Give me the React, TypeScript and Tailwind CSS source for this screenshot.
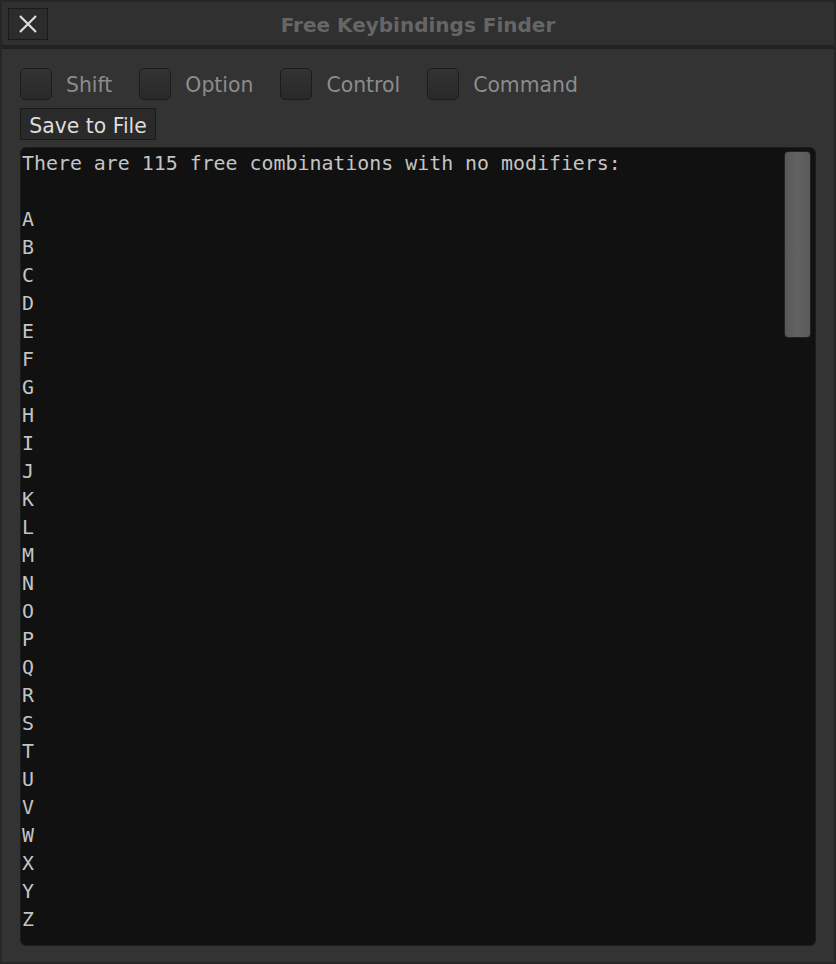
import React from "react";

const letters = "ABCDEFGHIJKLMNOPQRSTUVWXYZ".split("");

function Check({ label }: { label: string }) {
  return (
    <div className="flex items-center">
      <div className="w-[32px] h-[32px] rounded-[5px] border border-[#1c1c1c] bg-gradient-to-b from-[#333333] to-[#292929]" />
      <span className="ml-[14px] text-[20.4px] leading-none text-[#8c8c8c] pt-[3px]">{label}</span>
    </div>
  );
}

export default function App() {
  return (
    <div
      className="w-[836px] h-[964px] bg-[#262626] p-[2px] flex flex-col overflow-hidden"
      style={{ fontFamily: '"DejaVu Sans", sans-serif' }}
    >
      <div className="h-[43px] bg-[#303030] flex items-center relative shrink-0">
        <button className="absolute left-[6px] top-[6px] w-[40px] h-[32px] border border-[#1a1a1a] bg-[#2c2c2c] flex items-center justify-center">
          <svg width="18" height="18" viewBox="0 0 18 18">
            <path d="M1 1 L17 17 M17 1 L1 17" stroke="#dedede" strokeWidth="2.2" />
          </svg>
        </button>
        <div className="flex-1 text-center font-bold text-[20px] text-[#666666] pt-[3px]">Free Keybindings Finder</div>
      </div>
      <div className="h-[4px] bg-[#222222] shrink-0" />
      <div className="flex-1 bg-[#333333] px-[18px] pt-[18px] pb-[16px] flex flex-col">
        <div className="flex items-center gap-[27px] h-[33px]">
          <Check label="Shift" />
          <Check label="Option" />
          <Check label="Control" />
          <Check label="Command" />
        </div>
        <div className="mt-[8px]">
          <button className="w-[136px] h-[32px] border border-[#1a1a1a] bg-[#2a2a2a] text-[20.4px] text-[#dddddd] flex items-center justify-center leading-none pt-[4px]">
            Save to File
          </button>
        </div>
        <div className="mt-[7px] flex-1 bg-[#111111] rounded-[6px] border border-[#1c1c1c] relative overflow-hidden">
          <div
            className="pl-[1px] pt-[2px] text-[19.9px] leading-[28px] text-[#c4c4c4] whitespace-pre"
            style={{ fontFamily: '"DejaVu Sans Mono", monospace' }}
          >
            {"There are 115 free combinations with no modifiers:\n\n" + letters.join("\n")}
          </div>
          <div className="absolute right-[4px] top-[3px] w-[27px] h-[187px] rounded-[4px] border border-[#222222] bg-gradient-to-r from-[#595959] via-[#626262] to-[#5a5a5a]" />
        </div>
      </div>
    </div>
  );
}
